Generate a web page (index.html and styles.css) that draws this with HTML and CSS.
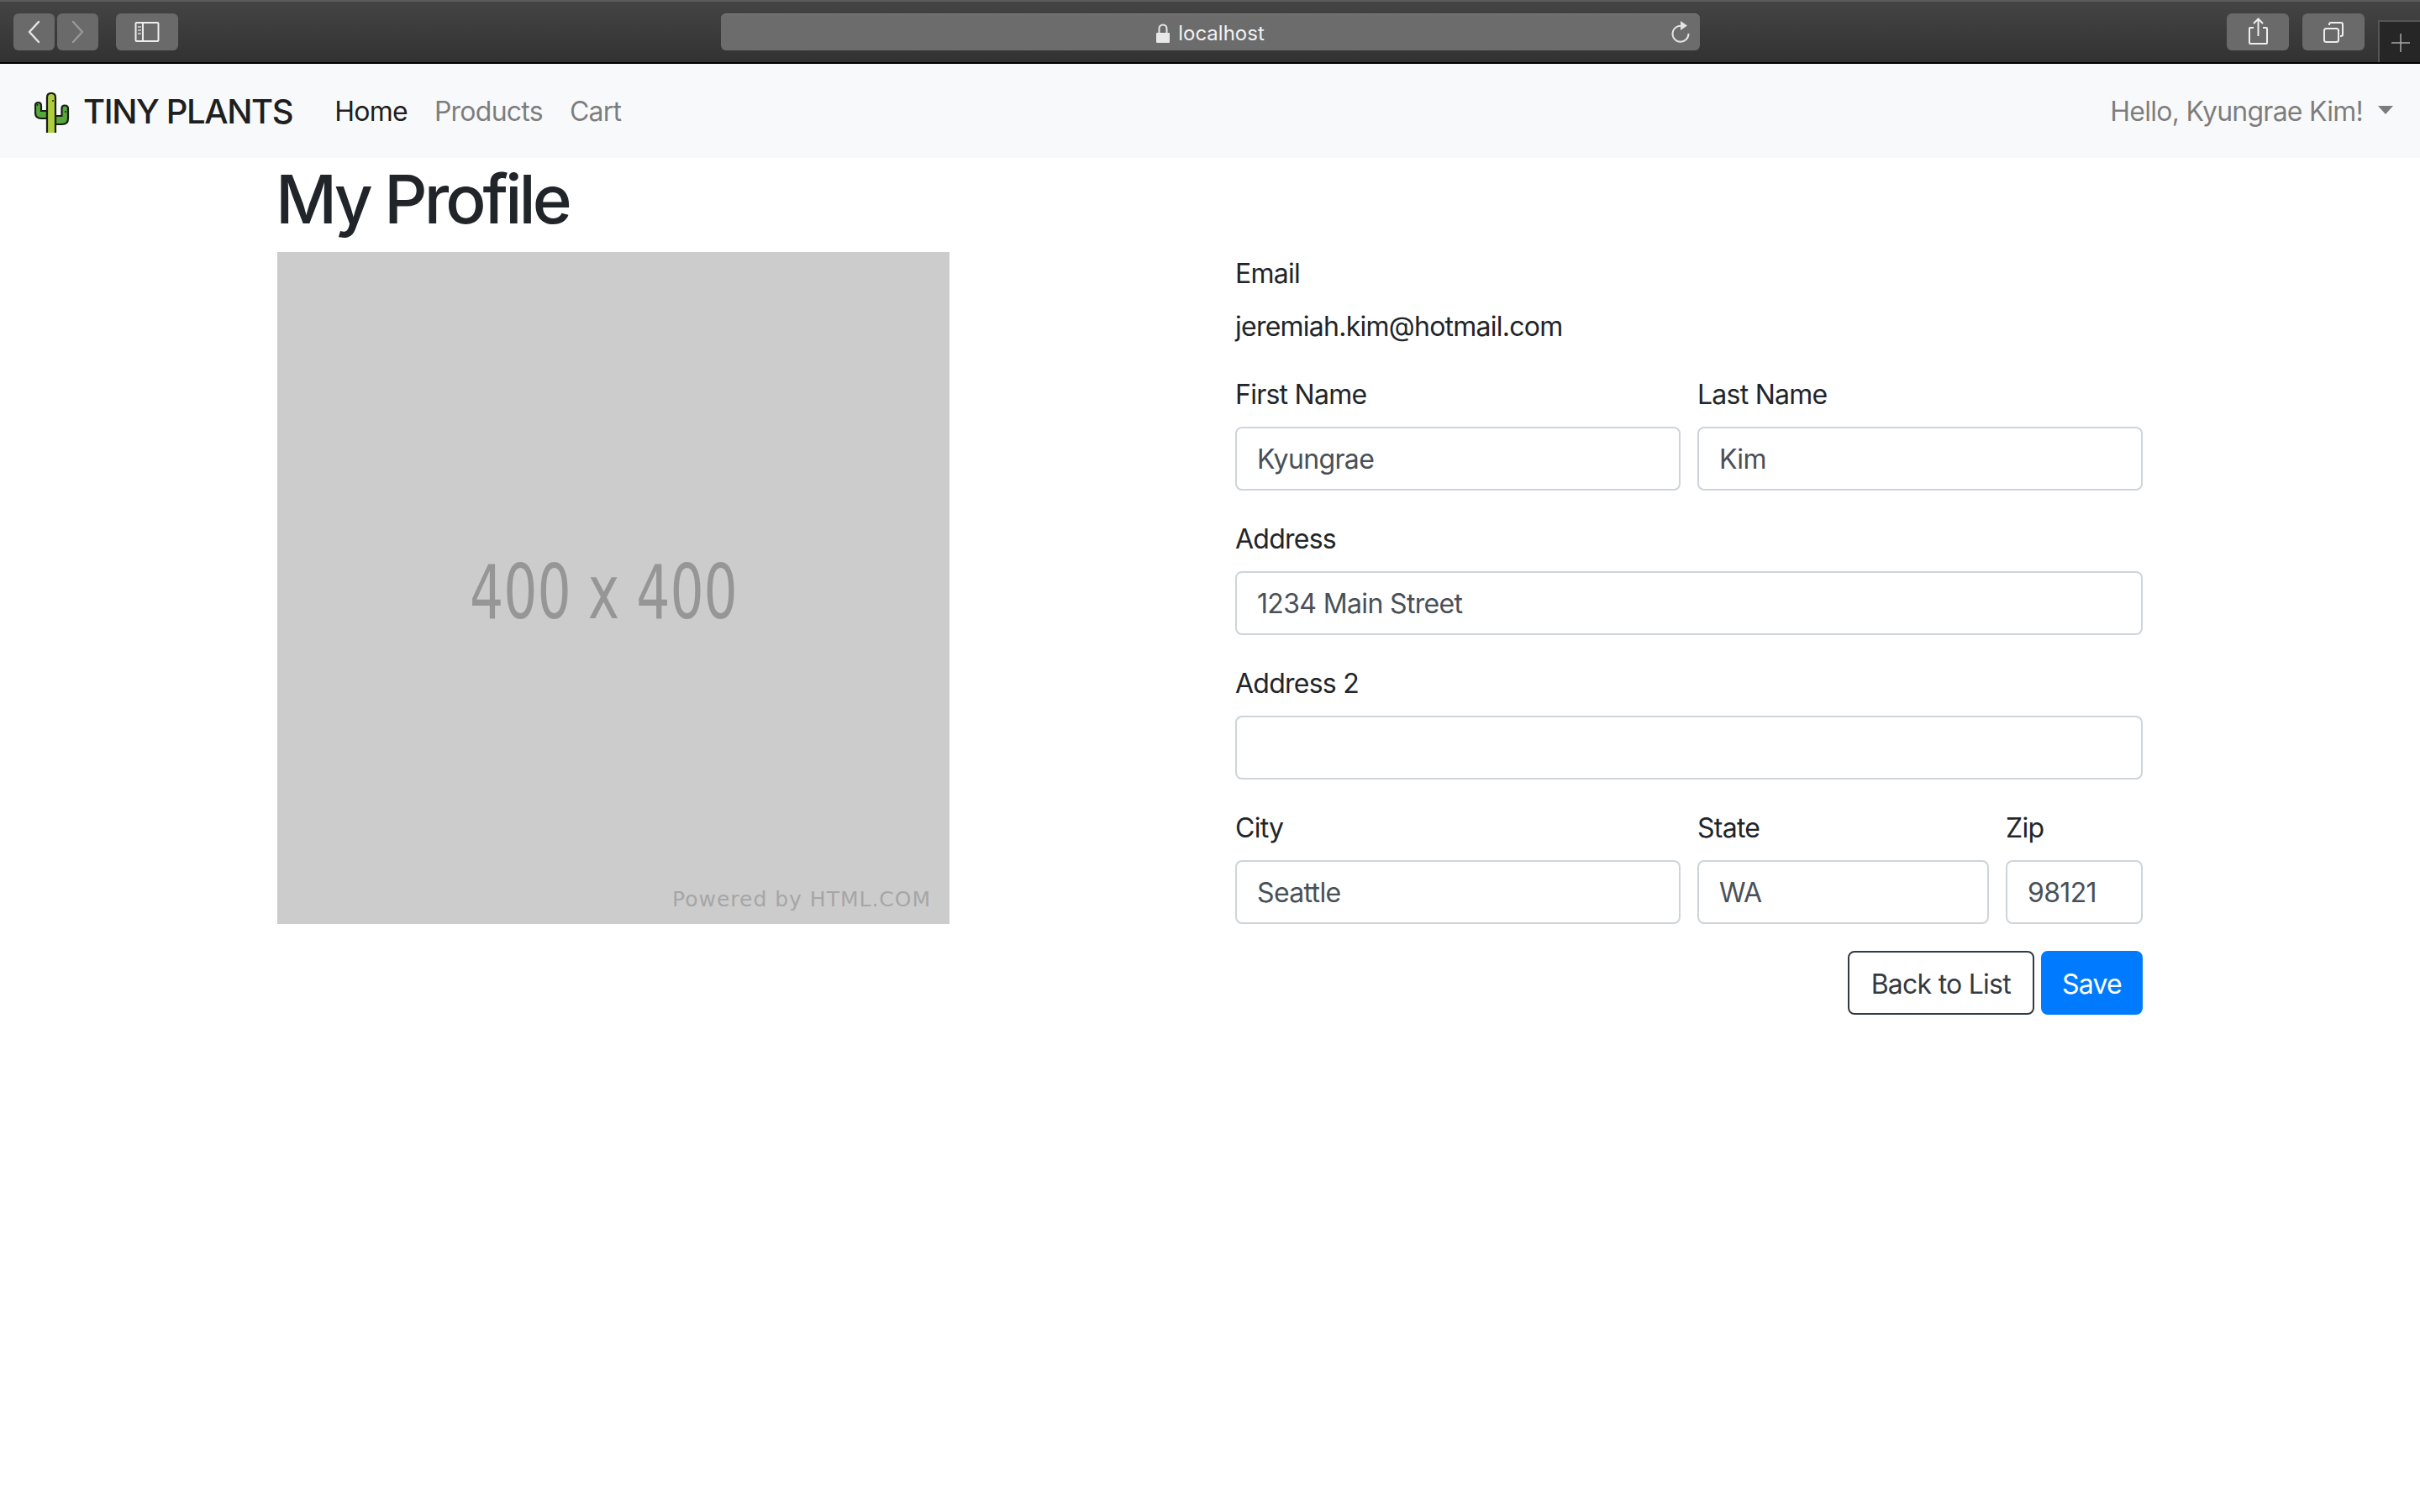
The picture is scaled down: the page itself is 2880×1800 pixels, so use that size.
FILE: index.html
```html
<!DOCTYPE html>
<html lang="en">
<head>
    <meta charset="UTF-8">
    <title>Tiny Plants - My Profile</title>
    <link rel="stylesheet" href="styles.css">
</head>
<body>
    <div class="toolbar">
        <div class="toolbar-left">
            <div class="tool-btn nav-btn">
                <svg width="49" height="44" viewBox="0 0 49 44"><path d="M30 10 L19 22 L30 34" fill="none" stroke="#e4e4e4" stroke-width="2.5" stroke-linecap="round" stroke-linejoin="round"/></svg>
            </div>
            <div class="tool-btn nav-btn">
                <svg width="49" height="44" viewBox="0 0 49 44"><path d="M19 10 L30 22 L19 34" fill="none" stroke="#989898" stroke-width="2.5" stroke-linecap="round" stroke-linejoin="round"/></svg>
            </div>
            <div class="tool-btn wide-btn sidebar-btn">
                <svg width="74" height="44" viewBox="0 0 74 44"><rect x="23.500" y="11" width="27" height="22" rx="1" fill="none" stroke="#eee" stroke-width="2"/><path d="M32 11 V33" stroke="#eee" stroke-width="2"/><path d="M26 16 H30 M26 20 H30 M26 24 H30" stroke="#bbb" stroke-width="2"/></svg>
            </div>
        </div>
        <div class="address-bar">
            <span class="address-text">
                <svg width="18" height="24" viewBox="0 0 18 24"><path d="M4.500 11 V6 a4.500 4.500 0 0 1 9 0 V11" fill="none" stroke="#e8e8e8" stroke-width="2"/><rect x="1" y="11" width="16" height="12" rx="1" fill="#e8e8e8"/></svg>
                localhost
            </span>
            <svg class="reload" width="24" height="27" viewBox="0 0 24 27"><path d="M14 6 A9.500 9.500 0 1 0 21.500 15" fill="none" stroke="#e4e4e4" stroke-width="2"/><path d="M12 0 L20 5.500 L12 11 Z" fill="#e4e4e4"/></svg>
        </div>
        <div class="toolbar-right">
            <div class="tool-btn wide-btn">
                <svg width="74" height="44" viewBox="0 0 74 44"><path d="M32 17 H27.500 Q27 17 27 18 V35 Q27 36 28 36 H47 Q48 36 48 35 V18 Q48 17 47 17 H43" fill="none" stroke="#eee" stroke-width="2"/><path d="M37.500 27 V7 M32 12 L37.500 6.500 L43 12" fill="none" stroke="#eee" stroke-width="2"/></svg>
            </div>
            <div class="tool-btn wide-btn">
                <svg width="74" height="44" viewBox="0 0 74 44"><rect x="26" y="18" width="17" height="16" rx="2.500" fill="none" stroke="#eee" stroke-width="2"/><path d="M32 14 V13 Q32 11 34 11 H46 Q48 11 48 13 V25 Q48 27 46 27 H45" fill="none" stroke="#eee" stroke-width="2"/></svg>
            </div>
            <div class="new-tab">
                <svg width="22" height="22" viewBox="0 0 22 22"><path d="M11 0 V22 M0 11 H22" stroke="#a8a8a8" stroke-width="1.500"/></svg>
            </div>
        </div>
    </div>

    <nav class="navbar">
        <a class="brand">
            <svg class="cactus" width="42" height="48" viewBox="0 0 42 48">
                <path d="M15 31 H8 Q1 31 1 24 V16 Q1 12 4.500 12 Q8 12 8 16 V22 H15 Z" fill="#57a83a" stroke="#1b1b1b" stroke-width="2.200"/>
                <path d="M25 38 H33 Q40 38 40 31 V19 Q40 15.500 36 15.500 Q32.500 15.500 32.500 19 V28 H25 Z" fill="#57a83a" stroke="#1b1b1b" stroke-width="2.200"/>
                <path d="M15 48 V6 Q15 1 20 1 Q25 1 25 6 V48" fill="#aecf3c" stroke="#1b1b1b" stroke-width="2.200"/>
                <circle cx="22" cy="10" r="1" fill="#1b1b1b"/><circle cx="3.500" cy="15" r="1" fill="#1b1b1b"/><circle cx="37" cy="23" r="1" fill="#1b1b1b"/>
            </svg>
            TINY PLANTS
        </a>
        <ul class="nav-links">
            <li><a class="active">Home</a></li>
            <li><a>Products</a></li>
            <li><a>Cart</a></li>
        </ul>
        <a class="user-menu">Hello, Kyungrae Kim!<span class="caret"></span></a>
    </nav>

    <div class="container">
        <h1>My Profile</h1>
        <div class="profile">
            <div class="placeholder">
                <span class="placeholder-size">400 x 400</span>
                <span class="placeholder-credit">Powered by HTML.COM</span>
            </div>
            <form class="profile-form">
                <div class="form-group">
                    <label>Email</label>
                    <p class="plain-value">jeremiah.kim@hotmail.com</p>
                </div>
                <div class="form-row half">
                    <div class="form-group">
                        <label for="first">First Name</label>
                        <input type="text" id="first" value="Kyungrae">
                    </div>
                    <div class="form-group">
                        <label for="last">Last Name</label>
                        <input type="text" id="last" value="Kim">
                    </div>
                </div>
                <div class="form-group">
                    <label for="address">Address</label>
                    <input type="text" id="address" value="1234 Main Street">
                </div>
                <div class="form-group">
                    <label for="address2">Address 2</label>
                    <input type="text" id="address2">
                </div>
                <div class="form-row thirds">
                    <div class="form-group">
                        <label for="city">City</label>
                        <input type="text" id="city" value="Seattle">
                    </div>
                    <div class="form-group">
                        <label for="state">State</label>
                        <input type="text" id="state" value="WA">
                    </div>
                    <div class="form-group">
                        <label for="zip">Zip</label>
                        <input type="text" id="zip" value="98121">
                    </div>
                </div>
                <div class="form-actions">
                    <button type="button" class="btn btn-outline">Back to List</button>
                    <button type="submit" class="btn btn-primary">Save</button>
                </div>
            </form>
        </div>
    </div>
</body>
</html>
```

FILE: styles.css
```css
* {
    box-sizing: border-box;
}

body {
    margin: 0;
    font-family: Inter, "Liberation Sans", sans-serif;
    font-size: 32px;
    line-height: 48px;
    letter-spacing: -0.75px;
    color: #212529;
    background-color: #fff;
}

/* browser chrome */
.toolbar {
    height: 76px;
    display: grid;
    grid-template-columns: 1fr 1165px 1fr;
    background: linear-gradient(#444444, #323232);
    border-top: 2px solid #5c5c5c;
    border-bottom: 2px solid #000;
}

.toolbar-left,
.toolbar-right {
    display: flex;
    padding-top: 14px;
}

.toolbar-left {
    padding-left: 16px;
}

.toolbar-right {
    justify-content: flex-end;
}

.tool-btn {
    height: 44px;
    background-color: #6a6a6a;
    border-radius: 6px;
}

.tool-btn svg {
    display: block;
}

.nav-btn {
    width: 49px;
    margin-right: 3px;
}

.wide-btn {
    width: 74px;
}

.sidebar-btn {
    margin-left: 18px;
}

.toolbar-right .wide-btn {
    margin-right: 16px;
}

.new-tab {
    width: 50px;
    height: 50px;
    margin-top: 8px;
    padding: 14px 0 0 14px;
    background-color: #262626;
    border-top: 2px solid #555;
    border-left: 2px solid #555;
}

.new-tab svg {
    display: block;
}

.address-bar {
    position: relative;
    height: 44px;
    margin-top: 14px;
    display: flex;
    justify-content: center;
    align-items: center;
    background-color: #6c6c6c;
    border-top: 1px solid #808080;
    border-radius: 6px;
}

.address-text {
    display: flex;
    align-items: center;
    gap: 9px;
    padding-top: 2px;
    font-size: 24px;
    line-height: 30px;
    letter-spacing: 0;
    color: #f2f2f2;
}

.reload {
    position: absolute;
    right: 11px;
    top: 8px;
}

/* navbar */
.navbar {
    height: 112px;
    display: flex;
    align-items: center;
    padding: 2px 32px 0 41px;
    background-color: #f8f9fa;
}

.brand {
    display: flex;
    align-items: center;
    gap: 16px;
    margin-right: 50px;
    font-size: 40px;
    font-weight: 500;
    letter-spacing: -1.4px;
    color: rgba(0, 0, 0, 0.9);
}

.cactus {
    display: block;
    margin-top: 2px;
}

.nav-links {
    display: flex;
    gap: 32px;
    margin: 0;
    padding: 0;
    list-style: none;
    color: rgba(0, 0, 0, 0.5);
}

.nav-links .active {
    color: rgba(0, 0, 0, 0.9);
}

.user-menu {
    display: flex;
    align-items: center;
    margin-left: auto;
    color: rgba(0, 0, 0, 0.5);
}

.caret {
    width: 0;
    height: 0;
    margin-left: 18px;
    margin-top: -4px;
    border-top: 10px solid rgba(0, 0, 0, 0.5);
    border-left: 9px solid transparent;
    border-right: 9px solid transparent;
}

/* page */
.container {
    width: 2280px;
    margin: 0 auto;
    padding: 0 30px;
}

h1 {
    margin: 0 0 16px -2px;
    padding-top: 2px;
    font-size: 80px;
    font-weight: 500;
    line-height: 94px;
    letter-spacing: -3.9px;
}

.profile {
    display: grid;
    grid-template-columns: 1fr 1080px;
}

.placeholder {
    position: relative;
    width: 800px;
    height: 800px;
    background-color: #cccccc;
}

.placeholder-size {
    position: absolute;
    left: 229px;
    top: 365px;
    font-family: "DejaVu Sans", sans-serif;
    font-size: 89px;
    line-height: 80px;
    letter-spacing: 0;
    color: #969696;
    white-space: nowrap;
    transform: scaleX(0.71);
    transform-origin: left center;
}

.placeholder-credit {
    position: absolute;
    left: 470px;
    top: 753px;
    font-family: "DejaVu Sans", sans-serif;
    font-size: 25px;
    line-height: 36px;
    letter-spacing: 1px;
    color: #a6a6a6;
    white-space: nowrap;
}

.form-group {
    margin-bottom: 32px;
}

label {
    display: block;
    padding-top: 2px;
    margin-bottom: 14px;
}

.plain-value {
    height: 48px;
    margin: 0;
    padding-top: 1px;
}

.form-row {
    display: grid;
    column-gap: 20px;
}

.half {
    grid-template-columns: 530px 530px;
}

.thirds {
    grid-template-columns: 530px 347px 163px;
}

input {
    display: block;
    width: 100%;
    height: 76px;
    padding: 12px 24px;
    font: inherit;
    letter-spacing: -0.65px;
    color: #495057;
    background-color: #fff;
    border: 2px solid #ced4da;
    border-radius: 8px;
}

.form-actions {
    display: flex;
    justify-content: flex-end;
    gap: 8px;
}

.btn {
    height: 76px;
    padding: 14px 23px 10px;
    font: inherit;
    letter-spacing: inherit;
    border: 2px solid transparent;
    border-radius: 8px;
}

.btn-outline {
    padding: 14px 26px 10px;
    color: #343a40;
    background-color: #fff;
    border-color: #343a40;
}

.btn-primary {
    color: #fff;
    background-color: #007bff;
    border-color: #007bff;
}
```
